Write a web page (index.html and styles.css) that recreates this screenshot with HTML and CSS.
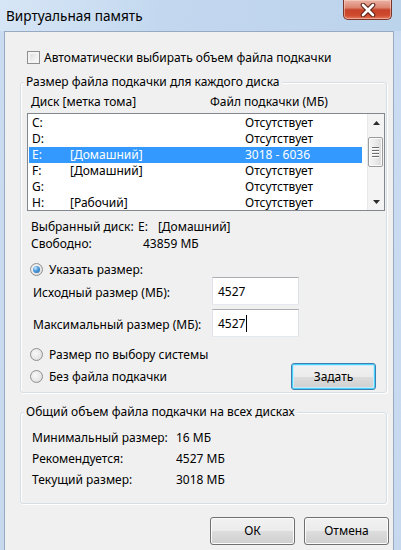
FILE: index.html
```html
<!DOCTYPE html>
<html lang="ru">
<head>
<meta charset="utf-8">
<title>Виртуальная память</title>
<link rel="stylesheet" href="styles.css">
</head>
<body>
<div class="window">
  <div class="titlebar">
    <span class="title">Виртуальная память</span>
    <div class="close">
      <svg width="16" height="14" viewBox="0 0 16 14">
        <path d="M3 2 L13 12 M13 2 L3 12" stroke="#5b2418" stroke-width="4.6" stroke-linecap="round"/>
        <path d="M3 2 L13 12 M13 2 L3 12" stroke="#ffffff" stroke-width="2.6" stroke-linecap="round"/>
      </svg>
    </div>
  </div>
  <div class="client">
    <div class="check-row"><span class="checkbox"></span><span>Автоматически выбирать объем файла подкачки</span></div>

    <div class="group group-disks">
      <div class="group-title">Размер файла подкачки для каждого диска</div>
      <div class="list-head"><span class="col-disk">Диск [метка тома]</span><span>Файл подкачки (МБ)</span></div>
      <div class="listbox">
        <div class="rows">
          <div class="row"><span class="c1">C:</span><span class="c2"></span><span>Отсутствует</span></div>
          <div class="row"><span class="c1">D:</span><span class="c2"></span><span>Отсутствует</span></div>
          <div class="row sel"><span class="c1">E:</span><span class="c2">[Домашний]</span><span>3018 - 6036</span></div>
          <div class="row"><span class="c1">F:</span><span class="c2">[Домашний]</span><span>Отсутствует</span></div>
          <div class="row"><span class="c1">G:</span><span class="c2"></span><span>Отсутствует</span></div>
          <div class="row"><span class="c1">H:</span><span class="c2">[Рабочий]</span><span>Отсутствует</span></div>
        </div>
        <div class="scrollbar">
          <div class="sb-btn"><svg width="7" height="4" viewBox="0 0 7 4"><polygon points="3.5,0 7,4 0,4" fill="#2b2b2b"/></svg></div>
          <div class="sb-track">
            <div class="sb-thumb"><span class="grip"></span><span class="grip"></span><span class="grip"></span><span class="grip"></span></div>
          </div>
          <div class="sb-btn"><svg width="7" height="4" viewBox="0 0 7 4"><polygon points="0,0 7,0 3.5,4" fill="#2b2b2b"/></svg></div>
        </div>
      </div>

      <div class="info">
        <div class="info-row"><span class="k k-sel">Выбранный диск:</span><span>E:</span><span class="vol">[Домашний]</span></div>
        <div class="info-row"><span class="k k-free">Свободно:</span><span>43859 МБ</span></div>
      </div>

      <div class="radio-row first"><span class="radio on"></span><span>Указать размер:</span></div>
      <div class="field-row"><span class="field-label">Исходный размер (МБ):</span><span class="input">4527</span></div>
      <div class="field-row second"><span class="field-label">Максимальный размер (МБ):</span><span class="input">4527<span class="caret"></span></span></div>
      <div class="radio-row sys"><span class="radio"></span><span>Размер по выбору системы</span></div>
      <div class="radio-row last">
        <span class="radio"></span><span>Без файла подкачки</span>
        <span class="btn btn-focus set">Задать</span>
      </div>
    </div>

    <div class="group group-total">
      <div class="group-title">Общий объем файла подкачки на всех дисках</div>
      <div class="sum">
        <div class="sum-row"><span class="sk">Минимальный размер:</span><span>16 МБ</span></div>
        <div class="sum-row"><span class="sk">Рекомендуется:</span><span>4527 МБ</span></div>
        <div class="sum-row"><span class="sk">Текущий размер:</span><span>3018 МБ</span></div>
      </div>
    </div>

    <div class="buttons">
      <span class="btn">ОК</span>
      <span class="btn">Отмена</span>
    </div>
  </div>
</div>
</body>
</html>
```

FILE: styles.css
```css
* { box-sizing: border-box; }
html, body { margin: 0; padding: 0; }
body {
  width: 401px;
  height: 550px;
  overflow: hidden;
  font-family: "Noto Sans", "Open Sans", sans-serif;
  font-size: 12px;
  color: #000;
}
.window {
  width: 401px;
  height: 550px;
  display: flex;
  flex-direction: column;
  background: linear-gradient(to bottom, #c0d6ee 0, #cadcf1 40px, #c6d9ef 100%);
}
.titlebar {
  height: 31px;
  flex: none;
  display: flex;
  align-items: flex-start;
  background: linear-gradient(100deg, #d7e6f6 0, #c3d8ef 40%, #bcd3ec 100%);
}
.title {
  margin-left: 6px;
  margin-top: 7px;
  font-size: 13.6px;
  line-height: 18px;
  color: #000;
  white-space: nowrap;
}
.close {
  margin-left: auto;
  margin-right: 9px;
  width: 49px;
  height: 20px;
  border: 1px solid #7a3429;
  border-top: none;
  border-radius: 0 0 5px 5px;
  background: linear-gradient(to bottom, #eab3a5 0, #dc8570 40%, #c7432a 52%, #d0492e 80%, #e07a5a 100%);
  box-shadow: inset 0 0 0 1px rgba(255, 220, 210, 0.5);
  display: flex;
  align-items: center;
  justify-content: center;
}
.client {
  flex: 1;
  margin-left: 4px;
  margin-right: 7px;
  background: #f0f0f0;
  border: 1px solid #97aac2;
  border-bottom: none;
  padding-top: 17px;
}
.check-row {
  display: flex;
  align-items: center;
  height: 16px;
  margin-left: 22px;
  gap: 4px;
  white-space: nowrap;
}
.checkbox {
  width: 13px;
  height: 13px;
  border: 1px solid #8e8f8f;
  background: linear-gradient(135deg, #d8d8d8 0, #f4f4f4 70%, #ffffff 100%);
  box-shadow: inset 0 0 0 2px #f4f4f4;
  flex: none;
}
.group {
  margin-left: 15px;
  width: 367px;
  border: 1px solid #d5dfe5;
  border-radius: 3px;
  box-shadow: inset 1px 1px 0 #ffffff, 1px 1px 0 #ffffff;
}
.group-disks { margin-top: 17px; padding-bottom: 2px; }
.group-total { margin-top: 19px; padding-bottom: 13px; }
.group-title {
  width: fit-content;
  margin-top: -9px;
  margin-left: 3px;
  padding: 0 2px;
  line-height: 16px;
  background: #f0f0f0;
  white-space: nowrap;
}
.list-head {
  margin-top: 4px;
  padding-left: 10px;
  height: 16px;
  line-height: 16px;
  display: flex;
  white-space: nowrap;
}
.col-disk { width: 179px; flex: none; }
.listbox {
  margin-top: 3px;
  margin-left: 6px;
  width: 358px;
  height: 98px;
  border: 1px solid #828790;
  background: #fff;
  display: flex;
}
.rows { flex: 1; padding-top: 1px; }
.row {
  height: 16px;
  line-height: 16px;
  margin-left: 1px;
  width: 333px;
  padding-left: 3px;
  display: flex;
  white-space: nowrap;
}
.row.sel { background: #3399ff; color: #fff; }
.c1 { width: 38px; flex: none; }
.c2 { width: 175px; flex: none; }
.scrollbar {
  width: 17px;
  flex: none;
  display: flex;
  flex-direction: column;
  background: #f3f3f3;
  border-left: 1px solid #e8e8e8;
}
.sb-btn {
  height: 17px;
  display: flex;
  align-items: center;
  justify-content: center;
}
.sb-track { flex: 1; padding-top: 6px; }
.sb-thumb {
  width: 15px;
  height: 30px;
  border: 1px solid #9c9c9c;
  border-radius: 2px;
  background: linear-gradient(to right, #f5f5f5 0, #eaeaea 50%, #d9d9d9 100%);
  box-shadow: inset 0 0 0 1px #fbfbfb;
  display: flex;
  flex-direction: column;
  align-items: center;
  justify-content: center;
  gap: 2px;
}
.grip {
  width: 7px;
  height: 1px;
  background: #6d6d6d;
  box-shadow: 0 1px 0 #ffffff;
}
.info { margin-top: 7px; padding-left: 10px; }
.info-row { height: 17px; line-height: 17px; display: flex; white-space: nowrap; }
.k { flex: none; }
.k-sel { width: 107px; }
.k-free { width: 112px; }
.vol { margin-left: 10px; }
.radio-row {
  display: flex;
  align-items: center;
  gap: 6px;
  margin-left: 9px;
  height: 16px;
  white-space: nowrap;
}
.radio-row.first { margin-top: 10px; height: 15px; }
.radio-row.sys { margin-top: 9px; }
.radio-row.last { margin-top: 1px; height: 27px; }
.radio {
  width: 13px;
  height: 13px;
  border-radius: 50%;
  border: 1px solid #8e8f8f;
  background: radial-gradient(circle at 40% 40%, #f8f8f8 0, #e6e6e6 60%, #d4d4d4 100%);
  flex: none;
  position: relative;
}
.radio.on::after {
  content: "";
  position: absolute;
  left: 2px;
  top: 2px;
  width: 7px;
  height: 7px;
  border-radius: 50%;
  background: radial-gradient(circle at 35% 30%, #d5ecff 0, #5aa6e6 35%, #1d5d9c 100%);
}
.field-row {
  display: flex;
  align-items: center;
  margin-left: 12px;
  height: 28px;
  white-space: nowrap;
}
.field-row.second { margin-top: 4px; }
.field-label { width: 179px; flex: none; padding-top: 2px; }
.input {
  width: 87px;
  height: 28px;
  flex: none;
  border: 1px solid;
  border-color: #abadb3 #dbdfe6 #e3e9ef #e2e3ea;
  background: #fff;
  padding-left: 5px;
  display: flex;
  align-items: center;
}
.caret {
  width: 1px;
  height: 17px;
  background: #000;
  margin-left: 1px;
}
.btn {
  width: 85px;
  height: 28px;
  flex: none;
  border: 1px solid #707070;
  border-radius: 3px;
  background: linear-gradient(to bottom, #f2f2f2 0, #ebebeb 50%, #dddddd 50%, #cfcfcf 100%);
  box-shadow: inset 0 0 0 1px #fbfbfb;
  display: flex;
  align-items: center;
  justify-content: center;
  line-height: 16px;
}
.btn-focus {
  border-color: #3c7fb1;
  box-shadow: inset 0 0 0 1px #48d2fb, inset 0 0 0 2px #c8eafa;
}
.set { margin-left: auto; margin-right: 10px; height: 27px; }
.sum { margin-top: 7px; padding-left: 11px; }
.sum-row { height: 21px; line-height: 21px; display: flex; white-space: nowrap; }
.sk { width: 144px; flex: none; }
.buttons {
  margin-top: 13px;
  display: flex;
  justify-content: flex-end;
  gap: 9px;
  margin-right: 4px;
}
```
